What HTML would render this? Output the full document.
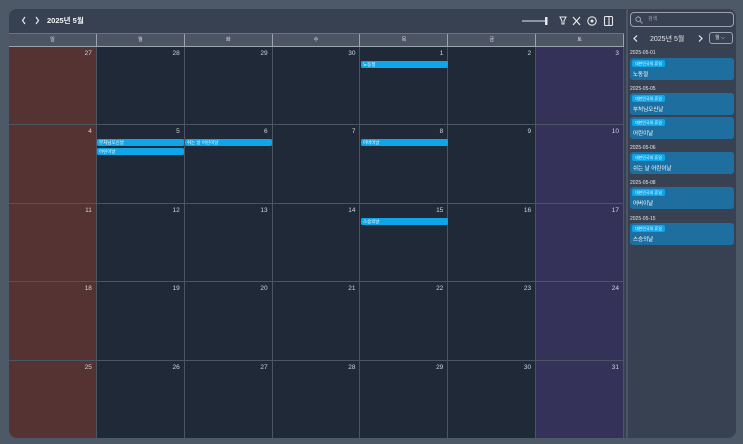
<!DOCTYPE html><html><head><meta charset="utf-8"><style>
*{box-sizing:border-box;margin:0;padding:0}
body{width:743px;height:444px;background:#4d5966;font-family:"Liberation Sans","Noto Sans CJK KR",sans-serif;position:relative;overflow:hidden;color:#e5e7eb}
.wrap{position:absolute;left:9px;top:9px;width:727px;height:429px;background:#374151;border-radius:8px;overflow:hidden}
.hdr{position:absolute;left:0;top:0;width:615px;height:24px;background:#374151}
.grid{position:absolute;left:0;top:24px;width:615px}
.wk{display:flex;height:14px;background:#4b5563;border-top:1px solid #6b7280;border-bottom:1px solid #9ca3af}
.wk div{flex:1;font-size:5px;text-align:center;line-height:13px;color:#e5e7eb;border-right:1px solid #9ca3af}
.row{display:flex;height:78.4px;border-bottom:1px solid #4b5563;position:relative}
.c{flex:1;background:#1f2937;border-right:1px solid #4b5563;font-size:6.5px;text-align:right;padding:3px 4px;color:#d1d5db}
.c.sun{background:#553333}.c.sat{background:#35325a}
.ev{position:absolute;height:7px;background:#0ea5e9;border-radius:1.5px;font-size:4.5px;line-height:7px;color:#fff;padding-left:2px;white-space:nowrap;overflow:hidden}
.side{position:absolute;left:617px;top:0;width:110px;height:429px;background:#374151;border-left:2px solid #4b5563}
.srch{position:absolute;left:2px;top:3px;width:104px;height:15px;border:1px solid #9ca3af;border-radius:4px;font-size:5px;line-height:13px;padding-left:17px;color:#9ca3af}
.dl{position:absolute;left:2px;font-size:5px;color:#e5e7eb}
.card{position:absolute;left:2px;width:104px;height:22px;background:#1e6fa0;border-radius:3px}
.card .t{position:absolute;left:2px;top:2px;height:7px;background:#0ea5e9;border-radius:2px;font-size:4px;line-height:7px;padding:0 3px;color:#fff}
.card .n{position:absolute;left:3px;top:12px;font-size:5.5px;color:#fff}
</style></head><body>
<div class="wrap">
<div class="hdr">
<svg style="position:absolute;left:12px;top:7px" width="20" height="9"><path d="M4 1L1.5 4.5L4 8M15 1L17.5 4.5L15 8" stroke="#e5e7eb" stroke-width="1.2" fill="none"/></svg>
<div style="position:absolute;left:38px;top:6px;font-size:7.5px;font-weight:bold;color:#f3f4f6">2025년 5월</div>
<svg style="position:absolute;left:510px;top:3px" width="105" height="18"><path d="M3 9H26" stroke="#e5e7eb" stroke-width="1"/><rect x="26" y="5" width="2.5" height="8" fill="#e5e7eb"/><path d="M41 5h6l-2 4v3h-2V9z" stroke="#e5e7eb" stroke-width="1" fill="none"/><path d="M54 5l7 8M61 5l-7 8" stroke="#e5e7eb" stroke-width="1.2"/><circle cx="73" cy="9" r="4.2" stroke="#e5e7eb" stroke-width="1.1" fill="none"/><circle cx="73" cy="9" r="1.5" fill="#e5e7eb"/><rect x="85.5" y="4.5" width="8" height="9" rx="1" stroke="#e5e7eb" stroke-width="1.1" fill="none"/><path d="M90 4.5v9" stroke="#e5e7eb" stroke-width="1.1"/></svg>
</div>
<div class="grid">
<div class="wk"><div>일</div><div>월</div><div>화</div><div>수</div><div>목</div><div>금</div><div>토</div></div>
<div class="row"><div class="c sun">27</div><div class="c">28</div><div class="c">29</div><div class="c">30</div><div class="c">1</div><div class="c">2</div><div class="c sat">3</div>
<div class="ev" style="left:352px;top:14px;width:87px">노동절</div></div>
<div class="row"><div class="c sun">4</div><div class="c">5</div><div class="c">6</div><div class="c">7</div><div class="c">8</div><div class="c">9</div><div class="c sat">10</div>
<div class="ev" style="left:88px;top:14px;width:87px">부처님오신날</div><div class="ev" style="left:88px;top:23px;width:87px">어린이날</div><div class="ev" style="left:176px;top:14px;width:87px">쉬는 날 어린이날</div><div class="ev" style="left:352px;top:14px;width:87px">어버이날</div></div>
<div class="row"><div class="c sun">11</div><div class="c">12</div><div class="c">13</div><div class="c">14</div><div class="c">15</div><div class="c">16</div><div class="c sat">17</div>
<div class="ev" style="left:352px;top:14px;width:87px">스승의날</div></div>
<div class="row"><div class="c sun">18</div><div class="c">19</div><div class="c">20</div><div class="c">21</div><div class="c">22</div><div class="c">23</div><div class="c sat">24</div></div>
<div class="row" style="border:0"><div class="c sun">25</div><div class="c">26</div><div class="c">27</div><div class="c">28</div><div class="c">29</div><div class="c">30</div><div class="c sat">31</div></div>
</div>
<div class="side">
<div class="srch">검색</div>
<svg style="position:absolute;left:7px;top:7px" width="8" height="8"><circle cx="3.2" cy="3.2" r="2.3" stroke="#9ca3af" fill="none"/><path d="M5 5l2.5 2.5" stroke="#9ca3af"/></svg>
<svg style="position:absolute;left:4px;top:25px" width="8" height="9"><path d="M5 1.5L2 4.5L5 7.5" stroke="#e5e7eb" stroke-width="1.2" fill="none"/></svg>
<div style="position:absolute;left:22px;top:25px;font-size:7px;color:#e5e7eb">2025년 5월</div>
<svg style="position:absolute;left:68px;top:25px" width="8" height="9"><path d="M3 1.5L6 4.5L3 7.5" stroke="#e5e7eb" stroke-width="1.2" fill="none"/></svg>
<div style="position:absolute;left:81px;top:23px;width:24px;height:12px;border:1px solid #9ca3af;border-radius:3px;font-size:5px;line-height:10px;padding-left:5px">월 ⌵</div>
<div class="dl" style="top:41px">2025-05-01</div>
<div class="card" style="top:49px"><div class="t">대한민국의 휴일</div><div class="n">노동절</div></div>
<div class="dl" style="top:77px">2025-05-05</div>
<div class="card" style="top:84px"><div class="t">대한민국의 휴일</div><div class="n">부처님오신날</div></div>
<div class="card" style="top:108px"><div class="t">대한민국의 휴일</div><div class="n">어린이날</div></div>
<div class="dl" style="top:136px">2025-05-06</div>
<div class="card" style="top:143px"><div class="t">대한민국의 휴일</div><div class="n">쉬는 날 어린이날</div></div>
<div class="dl" style="top:171px">2025-05-08</div>
<div class="card" style="top:178px"><div class="t">대한민국의 휴일</div><div class="n">어버이날</div></div>
<div class="dl" style="top:207px">2025-05-15</div>
<div class="card" style="top:214px"><div class="t">대한민국의 휴일</div><div class="n">스승의날</div></div>
</div>
</div>
</body></html>
